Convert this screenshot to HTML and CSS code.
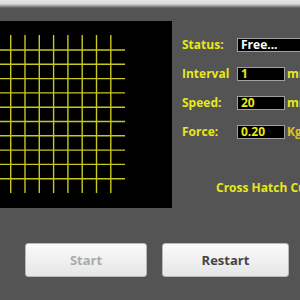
FILE: index.html
```html
<!DOCTYPE html>
<html lang="en">
<head>
    <meta charset="UTF-8">
    <meta name="viewport" content="width=device-width, initial-scale=1.0">
    <title>Cross Hatch</title>
    <link rel="stylesheet" href="styles.css">
</head>
<body>
    <div class="titlebar"></div>

    <div class="main">
        <!-- Scratch pattern preview -->
        <div class="canvas">
            <svg width="172" height="187" viewBox="0 0 172 187">
                <g stroke="#c8c81e" stroke-width="1.4">
                    <line x1="0" y1="29" x2="125" y2="29"/>
                    <line x1="0" y1="43.3" x2="125" y2="43.3"/>
                    <line x1="0" y1="57.6" x2="125" y2="57.6"/>
                    <line x1="0" y1="71.9" x2="125" y2="71.9"/>
                    <line x1="0" y1="86.2" x2="125" y2="86.2"/>
                    <line x1="0" y1="100.5" x2="125" y2="100.5"/>
                    <line x1="0" y1="114.8" x2="125" y2="114.8"/>
                    <line x1="0" y1="129.1" x2="125" y2="129.1"/>
                    <line x1="0" y1="143.4" x2="125" y2="143.4"/>
                    <line x1="0" y1="157.7" x2="125" y2="157.7"/>
                    <line x1="10.7" y1="14" x2="10.7" y2="172"/>
                    <line x1="25" y1="14" x2="25" y2="172"/>
                    <line x1="39.3" y1="14" x2="39.3" y2="172"/>
                    <line x1="53.6" y1="14" x2="53.6" y2="172"/>
                    <line x1="67.9" y1="14" x2="67.9" y2="172"/>
                    <line x1="82.2" y1="14" x2="82.2" y2="172"/>
                    <line x1="96.5" y1="14" x2="96.5" y2="172"/>
                    <line x1="110.8" y1="14" x2="110.8" y2="172"/>
                </g>
            </svg>
        </div>

        <!-- Settings -->
        <div class="panel">
            <div class="row">
                <span class="label">Status:</span>
                <span class="field status">Free...</span>
            </div>
            <div class="row">
                <span class="label">Interval</span>
                <span class="field">1</span>
                <span class="unit">mm</span>
            </div>
            <div class="row">
                <span class="label">Speed:</span>
                <span class="field">20</span>
                <span class="unit">mm/s</span>
            </div>
            <div class="row">
                <span class="label">Force:</span>
                <span class="field">0.20</span>
                <span class="unit kg">Kg</span>
            </div>
            <div class="mode">Cross Hatch Cut</div>
        </div>
    </div>

    <div class="buttons">
        <button class="btn start" disabled>Start</button>
        <button class="btn restart">Restart</button>
    </div>
</body>
</html>
```

FILE: styles.css
```css
html {
    overflow: hidden;
}

body {
    margin: 0;
    width: 300px;
    height: 300px;
    overflow: hidden;
    background-color: #545454;
    font-family: "Open Sans", "DejaVu Sans", sans-serif;
}

.titlebar {
    height: 8px;
    background: linear-gradient(#e4e4e4 0, #d8d8d8 4px, #545454 8px);
}

.main {
    display: flex;
    width: 300px;
    height: 200px;
    overflow: hidden;
}

.canvas {
    width: 172px;
    height: 187px;
    margin-top: 13px;
    flex-shrink: 0;
    background-color: #000;
}

.canvas svg {
    display: block;
}

.panel {
    flex: 1;
    min-width: 0;
    overflow: hidden;
    padding-top: 29px;
    padding-left: 10px;
    white-space: nowrap;
}

.row {
    display: flex;
    align-items: center;
    height: 15px;
    margin-bottom: 14px;
}

.label {
    width: 55px;
    flex-shrink: 0;
    color: #e8e81a;
    font-size: 12px;
    font-weight: bold;
}

.field {
    box-sizing: border-box;
    width: 48px;
    height: 14px;
    flex-shrink: 0;
    padding: 0 3px;
    border: 1px solid #a0a0a0;
    background-color: #000;
    color: #e8e81a;
    font-size: 12px;
    font-weight: bold;
    line-height: 12px;
}

.field.status {
    width: 90px;
    color: #fff;
}

.unit {
    margin-left: 2px;
    color: #e8e81a;
    font-size: 12px;
    font-weight: bold;
}

.unit.kg {
    color: #e0c020;
}

.mode {
    margin-top: 40px;
    margin-left: 34px;
    color: #e8e81a;
    font-size: 12px;
    font-weight: bold;
}

.buttons {
    display: flex;
    gap: 15px;
    padding-top: 35px;
    padding-left: 25px;
}

.btn {
    height: 34px;
    flex-shrink: 0;
    border: 1px solid #b8b8b8;
    border-radius: 3px;
    background: linear-gradient(#fafafa, #e6e6e6);
    font-family: "Open Sans", "DejaVu Sans", sans-serif;
    font-size: 13px;
    font-weight: bold;
}

.btn.start {
    width: 122px;
    color: #aaaaaa;
}

.btn.restart {
    width: 127px;
    color: #454545;
}
```
